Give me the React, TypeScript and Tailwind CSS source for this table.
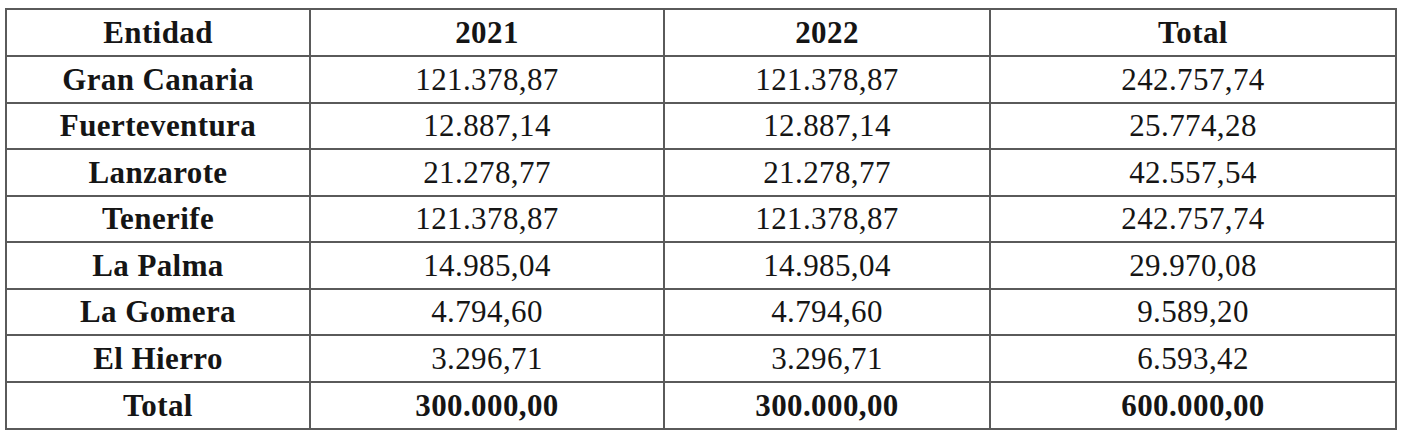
const rows: [string, string, string, string][] = [
  ["Gran Canaria", "121.378,87", "121.378,87", "242.757,74"],
  ["Fuerteventura", "12.887,14", "12.887,14", "25.774,28"],
  ["Lanzarote", "21.278,77", "21.278,77", "42.557,54"],
  ["Tenerife", "121.378,87", "121.378,87", "242.757,74"],
  ["La Palma", "14.985,04", "14.985,04", "29.970,08"],
  ["La Gomera", "4.794,60", "4.794,60", "9.589,20"],
  ["El Hierro", "3.296,71", "3.296,71", "6.593,42"],
];

const cell = "border-2 border-[#5a5a5a] text-center align-middle p-0 leading-none";

export default function App() {
  return (
    <div className="w-[1414px] h-[444px] bg-white pt-[8px] pl-[5px] font-['Liberation_Serif',serif] text-[31px] tracking-[0.4px] text-[#151515]">
      <table className="border-collapse table-fixed w-[1392px]">
        <colgroup>
          <col className="w-[304px]" />
          <col className="w-[354px]" />
          <col className="w-[326px]" />
          <col className="w-[406px]" />
        </colgroup>
        <tbody>
          <tr className="h-[47px] font-bold">
            <td className={cell}>Entidad</td>
            <td className={cell}>2021</td>
            <td className={cell}>2022</td>
            <td className={cell}>Total</td>
          </tr>
          {rows.map((r) => (
            <tr key={r[0]} className="h-[46.5px]">
              <td className={cell + " font-bold"}>{r[0]}</td>
              <td className={cell}>{r[1]}</td>
              <td className={cell}>{r[2]}</td>
              <td className={cell}>{r[3]}</td>
            </tr>
          ))}
          <tr className="h-[47px] font-bold">
            <td className={cell}>Total</td>
            <td className={cell}>300.000,00</td>
            <td className={cell}>300.000,00</td>
            <td className={cell}>600.000,00</td>
          </tr>
        </tbody>
      </table>
    </div>
  );
}
